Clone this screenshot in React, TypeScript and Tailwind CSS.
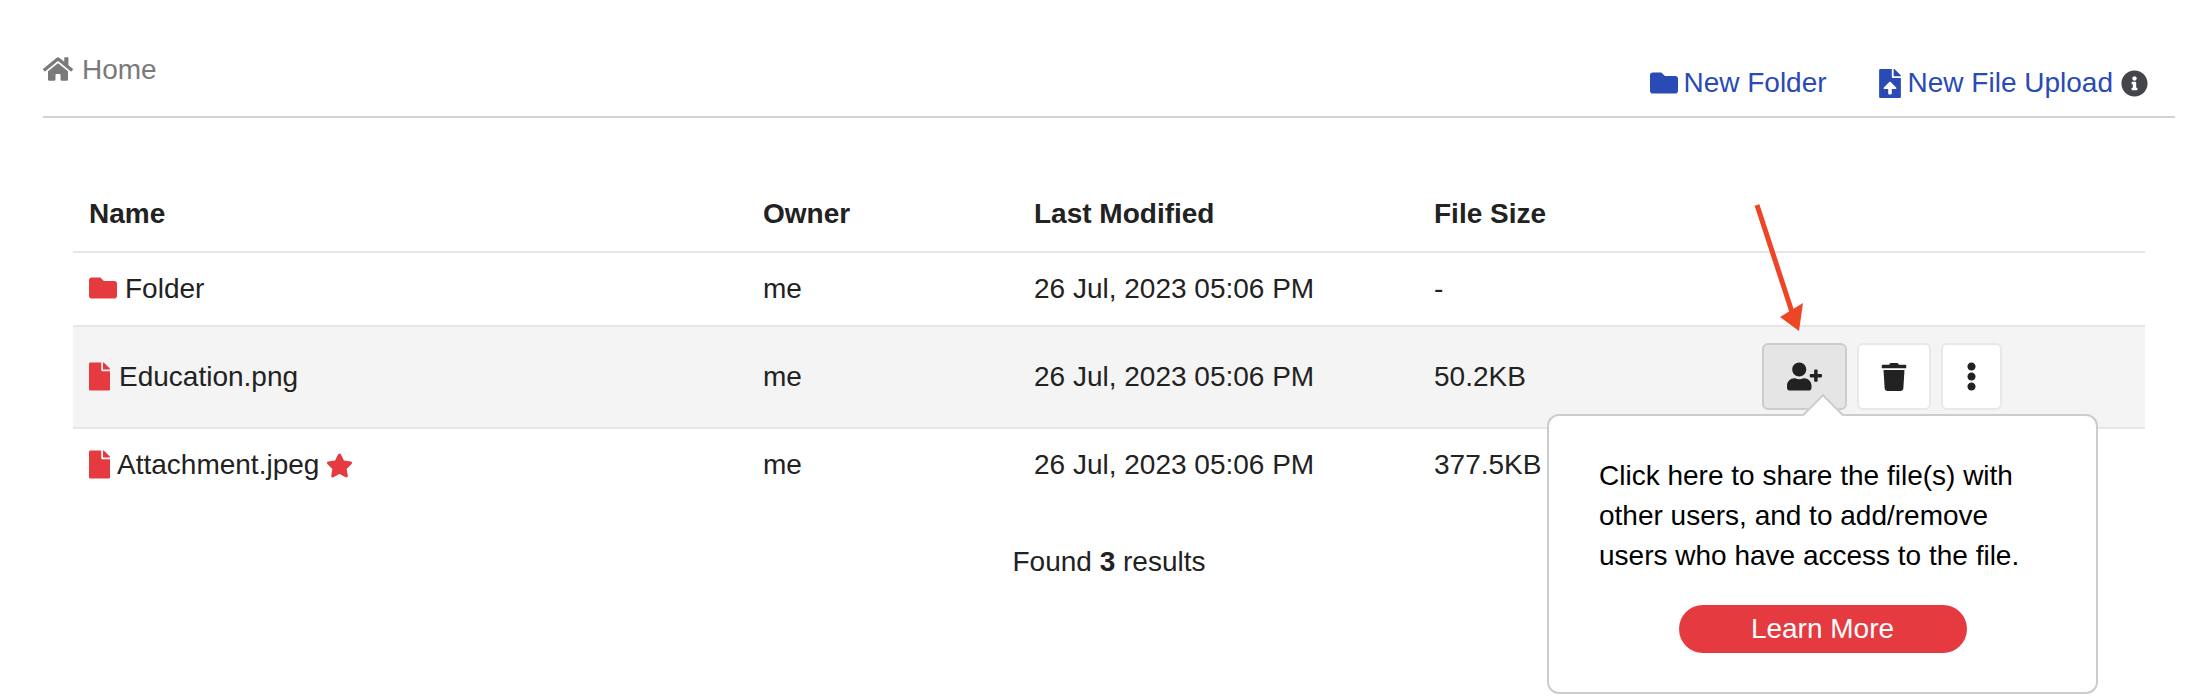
import { FaHome, FaFolder, FaFile, FaFileUpload, FaInfoCircle, FaUserPlus, FaTrash, FaEllipsisV, FaStar } from "react-icons/fa";

const ROW_CLASS = "grid grid-cols-[674px_271px_400px_328px_1fr] items-center border-b-2 border-[#e6e6e6]";

function ActionButtons() {
  return (
    <div className="relative -mt-[1px] flex gap-[10px]">
      <button className="flex h-[67px] w-[85px] items-center justify-center rounded-[6px] border-2 border-[#cccccc] bg-[#e5e5e5] text-[#222222]">
        <FaUserPlus size={35} />
      </button>
      <button className="flex h-[67px] w-[74px] items-center justify-center rounded-[6px] border-2 border-[#e8e8e8] bg-white text-[#222222]">
        <FaTrash size={28} />
      </button>
      <button className="flex h-[67px] w-[61px] items-center justify-center rounded-[6px] border-2 border-[#e8e8e8] bg-white text-[#222222]">
        <FaEllipsisV size={29} />
      </button>

      {/* --- POPOVER --- */}
      <div className="absolute left-[-215px] top-[71px] z-10 h-[280px] w-[551px] rounded-[12px] border-2 border-[#cccccc] bg-white px-[50px] pt-[40px] text-black">
        <div className="absolute left-[259px] top-[-16px] h-[30px] w-[30px] rotate-45 border-l-2 border-t-2 border-[#cccccc] bg-white" />
        <p className="relative text-[28px] leading-[40px] whitespace-nowrap">
          Click here to share the file(s) with
          <br />
          other users, and to add/remove
          <br />
          users who have access to the file.
        </p>
        <div className="mt-[29px] flex justify-center">
          <button className="h-[48px] w-[288px] rounded-full bg-[#e53a40] text-[28px] text-white">Learn More</button>
        </div>
      </div>
    </div>
  );
}

export default function App() {
  return (
    <main className="relative h-[696px] overflow-hidden bg-white font-['Liberation_Sans',Arial,sans-serif] text-[28px] text-[#222222]">
      {/* --- HEADER --- */}
      <header className="ml-[43px] mr-[12px] flex h-[118px] justify-between border-b-2 border-[#d2d2d2]">
        <div className="mt-[54px] flex h-[32px] items-center gap-[9px] text-[#7a7a7a]">
          <FaHome size={30} className="-mt-[2px]" />
          <span>Home</span>
        </div>
        <div className="mr-[27px] mt-[67px] flex h-[32px] items-center text-[#2a4ab5]">
          <FaFolder size={28} />
          <span className="ml-[5px]">New Folder</span>
          <FaFileUpload className="ml-[52px] h-[29px] w-[22px]" />
          <span className="ml-[7px]">New File Upload</span>
          <FaInfoCircle size={27} className="ml-[8px] text-[#43454a]" />
        </div>
      </header>

      {/* --- TABLE --- */}
      <section className="ml-[73px] mr-[42px] mt-[57px]">
        <div className={`${ROW_CLASS} h-[78px] pl-[16px] pt-[2px] font-bold`}>
          <span>Name</span>
          <span>Owner</span>
          <span>Last Modified</span>
          <span>File Size</span>
        </div>

        <div className={`${ROW_CLASS} h-[74px] pl-[16px]`}>
          <span className="flex items-center gap-[8px]">
            <FaFolder size={28} className="-mt-[2px] text-[#e53a40]" />
            Folder
          </span>
          <span>me</span>
          <span>26 Jul, 2023 05:06 PM</span>
          <span>-</span>
        </div>

        <div className={`${ROW_CLASS} h-[102px] bg-[#f4f4f4] pl-[16px]`}>
          <span className="flex items-center gap-[9px]">
            <FaFile className="-mt-[2px] h-[29px] w-[21px] text-[#e53a40]" />
            Education.png
          </span>
          <span>me</span>
          <span>26 Jul, 2023 05:06 PM</span>
          <span>50.2KB</span>
          <ActionButtons />
        </div>

        <div className="grid h-[72px] grid-cols-[674px_271px_400px_328px_1fr] items-center pl-[16px]">
          <span className="flex items-center gap-[7px]">
            <FaFile className="-mt-[2px] h-[29px] w-[21px] text-[#e53a40]" />
            Attachment.jpeg
            <FaStar size={27} className="text-[#e53a40]" />
          </span>
          <span>me</span>
          <span>26 Jul, 2023 05:06 PM</span>
          <span>377.5KB</span>
        </div>

        <p className="mt-[40px] text-center">
          Found <b>3</b> results
        </p>
      </section>

      {/* red annotation arrow */}
      <svg className="absolute left-[1740px] top-[195px] z-20" width="80" height="145" viewBox="0 0 80 145">
        <path d="M17 10 L52 117" stroke="#ee4526" strokeWidth="5" fill="none" />
        <path d="M40 122 L63 108 L59 136 Z" fill="#ee4526" />
      </svg>
    </main>
  );
}
